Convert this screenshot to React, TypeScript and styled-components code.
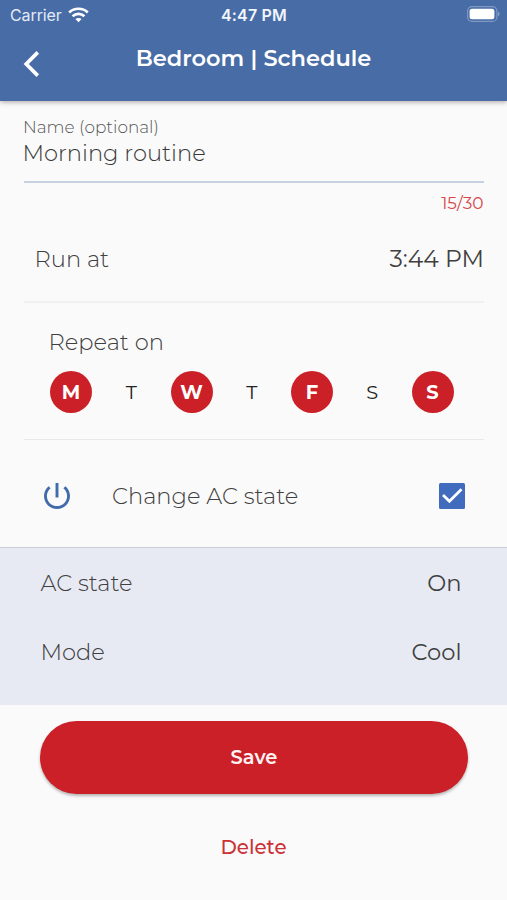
import React from 'react';
import styled, { createGlobalStyle } from 'styled-components';

const GlobalStyle = createGlobalStyle`
  * { box-sizing: border-box; }
  body { margin: 0; background: #fafafa; font-family: Montserrat, Inter, sans-serif; }
  button { border: 0; padding: 0; background: none; font: inherit; cursor: pointer; }
`;

const Screen = styled.div`
  display: flex;
  flex-direction: column;
  width: 507px;
  height: 900px;
  overflow: hidden;
  background: #fafafa;
`;

const Header = styled.header`
  flex: none;
  height: 101px;
  background: #486ca6;
  color: #fff;
  box-shadow: 0 1px 5px rgba(60, 30, 30, 0.4);
`;

const StatusBar = styled.div`
  display: grid;
  grid-template-columns: 1fr auto 1fr;
  align-items: center;
  height: 30px;
  padding: 0 7px 0 10px;
  font: 400 16px/30px Inter, sans-serif;
`;

const Carrier = styled.div`
  display: flex;
  align-items: center;
  gap: 6px;
  letter-spacing: -0.1px;
  color: #e3eaf6;
`;

const Clock = styled.time`
  font-weight: 600;
  letter-spacing: 0.2px;
  color: #f1f5fc;
  padding-right: 2px;
`;

const BatteryIcon = styled.svg`
  justify-self: end;
  margin-top: -2px;
`;

const NavBar = styled.div`
  display: grid;
  grid-template-columns: 62px 1fr 62px;
  height: 56px;
`;

const BackButton = styled.button`
  display: flex;
  align-items: center;
  padding: 12px 0 0 22px;
  color: #fff;
`;

const Title = styled.h1`
  margin: 0;
  font-size: 22.5px;
  font-weight: 600;
  line-height: 56px;
  text-align: center;
`;

const Form = styled.main`
  padding: 13px 23px 0 24px;
`;

const Field = styled.label`
  display: flex;
  flex-direction: column;
  height: 69px;
  border-bottom: 2px solid #c6d1e2;
`;

const FieldLabel = styled.span`
  margin-left: -1px;
  font-size: 16.9px;
  font-weight: 300;
  line-height: 26px;
  color: #555;
`;

const FieldValue = styled.span`
  margin-left: -1.5px;
  font-size: 22.6px;
  font-weight: 300;
  line-height: 27px;
  color: #383838;
`;

const Counter = styled.div`
  height: 40px;
  padding-right: 0.5px;
  font-size: 17px;
  line-height: 40px;
  text-align: right;
  color: #d5474b;
`;

const Label = styled.span`
  display: block;
  font-size: 22.6px;
  font-weight: 300;
  color: #404040;
`;

const Value = styled.span<{ $size?: number }>`
  font-size: ${(p) => p.$size ?? 22.6}px;
  font-weight: 400;
  color: #3f3f3f;
`;

const TimeRow = styled.div`
  display: flex;
  align-items: center;
  justify-content: space-between;
  height: 80px;
  padding: 0 0 7px 10.5px;
  border-bottom: 2px solid #f0f0f0;
`;

const Repeat = styled.section`
  height: 137px;
  padding: 22px 30px 0 24.5px;
  border-bottom: 1px solid #e8e8e8;
  line-height: 34px;
`;

const Days = styled.div`
  display: flex;
  justify-content: space-between;
  width: 403.5px;
  margin: 12px 0 0 1.5px;
`;

const Day = styled.button<{ $on: boolean }>`
  width: 42px;
  height: 42px;
  border-radius: 50%;
  font-size: 19.4px;
  font-weight: ${(p) => (p.$on ? 700 : 400)};
  line-height: 42px;
  text-align: center;
  color: ${(p) => (p.$on ? '#fff' : '#222')};
  background: ${(p) => (p.$on ? '#cb2027' : 'transparent')};
`;

const ToggleRow = styled.div`
  display: grid;
  grid-template-columns: 68px 1fr 26px;
  align-items: center;
  height: 107px;
  padding: 5px 19px 0 20px;
`;

const Checkbox = styled.span`
  display: flex;
  width: 26px;
  height: 26px;
  border-radius: 1.5px;
  background: #416bbd;
`;

const Settings = styled.section`
  flex: none;
  height: 158px;
  padding: 0 45.5px 0 40.5px;
  border-top: 1px solid #cbced6;
  background: #e7eaf3;
`;

const SettingRow = styled.div`
  display: flex;
  align-items: center;
  justify-content: space-between;
  height: 69px;
`;

const Actions = styled.footer`
  display: flex;
  flex-direction: column;
  align-items: center;
  padding-top: 16px;
`;

const SaveButton = styled.button`
  width: 428px;
  height: 73px;
  padding: 0 0 1px 1px;
  border-radius: 37px;
  font-size: 19.4px;
  font-weight: 600;
  color: #fff3f3;
  background: #cb2027;
  box-shadow: 0 2px 3px rgba(0, 0, 0, 0.28);
`;

const DeleteButton = styled.button`
  margin-top: 32px;
  font-size: 19.8px;
  font-weight: 500;
  line-height: 42px;
  color: #ca3238;
`;

const week = [
  { letter: 'M', on: true },
  { letter: 'T', on: false },
  { letter: 'W', on: true },
  { letter: 'T', on: false },
  { letter: 'F', on: true },
  { letter: 'S', on: false },
  { letter: 'S', on: true },
];

export default function App() {
  return (
    <Screen>
      <GlobalStyle />
      <Header>
        <StatusBar>
          <Carrier>
            Carrier
            <svg width="21" height="16" viewBox="0 0 21 16" fill="none" stroke="#fff" strokeWidth="2.7">
              <path d="M1.2 5.4C6.4 .5 14.6 .5 19.8 5.4" />
              <path d="M4.6 9.2C8 6.1 13 6.1 16.4 9.2" />
              <path d="M10.5 15.2L7.4 12.1C9 10.6 12 10.6 13.6 12.1Z" fill="#fff" stroke="none" />
            </svg>
          </Carrier>
          <Clock>4:47 PM</Clock>
          <BatteryIcon width="33" height="16" viewBox="0 0 33 16">
            <rect x="0.6" y="0.6" width="29.3" height="14.8" rx="4.5" fill="none" stroke="#7f98c3" strokeWidth="1.2" />
            <rect x="2.6" y="2.7" width="24.8" height="10.6" rx="2.5" fill="#fff" />
            <path d="M31.2 5.6c1.7.7 1.7 4.1 0 4.8z" fill="#91a7cc" />
          </BatteryIcon>
        </StatusBar>
        <NavBar>
          <BackButton aria-label="Back">
            <svg width="20" height="28" viewBox="0 0 20 28" fill="none" stroke="#fff" strokeWidth="3.7">
              <path d="M15.8 2.4L4.2 14L15.8 25.6" />
            </svg>
          </BackButton>
          <Title>Bedroom | Schedule</Title>
        </NavBar>
      </Header>
      <Form>
        <Field>
          <FieldLabel>Name (optional)</FieldLabel>
          <FieldValue>Morning routine</FieldValue>
        </Field>
        <Counter>15/30</Counter>
        <TimeRow>
          <Label>Run at</Label>
          <Value $size={23.5}>3:44 PM</Value>
        </TimeRow>
        <Repeat>
          <Label>Repeat on</Label>
          <Days>
            {week.map((day, i) => (
              <Day key={i} $on={day.on}>
                {day.letter}
              </Day>
            ))}
          </Days>
        </Repeat>
        <ToggleRow>
          <svg width="26" height="26" viewBox="3 3 18 18" fill="#426ca9">
            <path d="M13 3h-2v10h2V3zm4.83 2.17l-1.42 1.42C17.99 7.86 19 9.81 19 12c0 3.87-3.13 7-7 7s-7-3.13-7-7c0-2.19 1.01-4.14 2.58-5.42L6.17 5.17C4.23 6.82 3 9.26 3 12c0 4.97 4.03 9 9 9s9-4.03 9-9c0-2.74-1.23-5.18-3.17-6.83z" />
          </svg>
          <Label>Change AC state</Label>
          <Checkbox role="checkbox" aria-checked="true">
            <svg width="26" height="26" viewBox="0 0 26 26" fill="none" stroke="#fff" strokeWidth="2.7">
              <path d="M4 12L10.4 18.3L22.5 6.3" />
            </svg>
          </Checkbox>
        </ToggleRow>
      </Form>
      <Settings>
        <SettingRow>
          <Label>AC state</Label>
          <Value>On</Value>
        </SettingRow>
        <SettingRow>
          <Label>Mode</Label>
          <Value>Cool</Value>
        </SettingRow>
      </Settings>
      <Actions>
        <SaveButton>Save</SaveButton>
        <DeleteButton>Delete</DeleteButton>
      </Actions>
    </Screen>
  );
}
